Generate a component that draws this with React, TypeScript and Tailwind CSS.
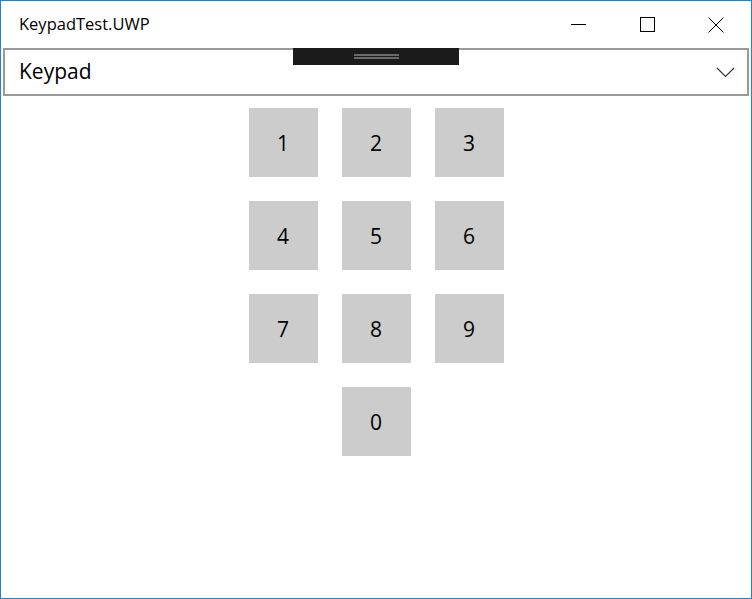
const keys = ['1', '2', '3', '4', '5', '6', '7', '8', '9'];

function Key({ label }: { label: string }) {
  return (
    <div className="w-[69px] h-[69px] bg-[#cccccc] flex items-center justify-center pt-[3px] text-[21px] text-black">
      {label}
    </div>
  );
}

export default function App() {
  return (
    <div
      className="w-[752px] h-[599px] border border-[#1883d7] bg-white flex flex-col overflow-hidden"
      style={{ fontFamily: '"Open Sans", "Noto Sans", sans-serif' }}
    >
      {/* title bar */}
      <div className="h-[47px] flex items-center shrink-0">
        <div className="pl-[18px] text-[16.5px] text-black flex-1">KeypadTest.UWP</div>
        <div className="flex h-full">
          <div className="w-[46px] h-full flex items-center justify-center">
            <div className="w-[15px] h-px bg-black"></div>
          </div>
          <div className="w-[46px] h-full flex items-center justify-center ml-[23px]">
            <div className="w-[15px] h-[15px] border border-black"></div>
          </div>
          <div className="w-[46px] h-full flex items-center justify-center ml-[23px] mr-[12px]">
            <svg width="16" height="16" viewBox="0 0 16 16">
              <path d="M0.5 0.5 L15.5 15.5 M15.5 0.5 L0.5 15.5" stroke="black" strokeWidth="1" />
            </svg>
          </div>
        </div>
      </div>

      {/* combo box */}
      <div className="relative mx-[2px] h-[48px] shrink-0 border-2 border-[#999999] flex items-center justify-between pl-[14px] pr-[12px]">
        <span className="text-[21px] text-black">Keypad</span>
        <svg width="19" height="11" viewBox="0 0 19 11" className="mt-[1px]">
          <path d="M1 1 L9.5 9.5 L18 1" fill="none" stroke="#333" strokeWidth="1.2" />
        </svg>
        {/* drag handle */}
        <div className="absolute top-[-2px] left-[288px] w-[166px] h-[17px] bg-[#1b1b1b] flex flex-col items-center justify-center gap-[1px]">
          <div className="w-[45px] h-[2px] bg-[#6a6a6a]"></div>
          <div className="w-[45px] h-[2px] bg-[#6a6a6a]"></div>
        </div>
      </div>

      {/* keypad */}
      <div className="flex justify-center pt-[12px]">
        <div className="grid grid-cols-[69px_69px_69px] gap-[24px]">
          {keys.map((k) => (
            <Key key={k} label={k} />
          ))}
          <div></div>
          <Key label="0" />
        </div>
      </div>
    </div>
  );
}
